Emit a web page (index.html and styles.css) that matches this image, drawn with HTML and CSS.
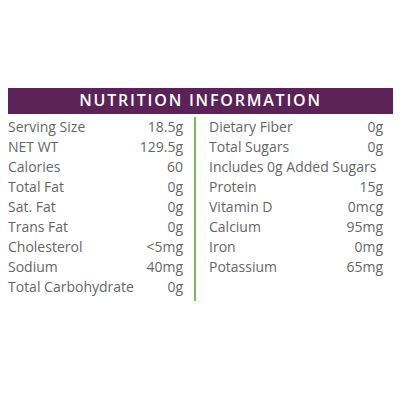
FILE: index.html
```html
<!DOCTYPE html>
<html lang="en">
<head>
  <meta charset="UTF-8">
  <meta name="viewport" content="width=device-width, initial-scale=1.0">
  <title>Nutrition Information</title>
  <link rel="stylesheet" href="styles.css">
</head>
<body>

  <div class="panel">
    <div class="panel-title">NUTRITION INFORMATION</div>

    <div class="facts">
      <!-- Kolom kiri -->
      <div class="col col-left">
        <div class="row"><span>Serving Size</span><span>18.5g</span></div>
        <div class="row"><span>NET WT</span><span>129.5g</span></div>
        <div class="row"><span>Calories</span><span>60</span></div>
        <div class="row"><span>Total Fat</span><span>0g</span></div>
        <div class="row"><span>Sat. Fat</span><span>0g</span></div>
        <div class="row"><span>Trans Fat</span><span>0g</span></div>
        <div class="row"><span>Cholesterol</span><span>&lt;5mg</span></div>
        <div class="row"><span>Sodium</span><span>40mg</span></div>
        <div class="row"><span>Total Carbohydrate</span><span>0g</span></div>
      </div>

      <!-- Kolom kanan -->
      <div class="col col-right">
        <div class="row"><span>Dietary Fiber</span><span>0g</span></div>
        <div class="row"><span>Total Sugars</span><span>0g</span></div>
        <div class="row"><span>Includes 0g Added Sugars</span></div>
        <div class="row"><span>Protein</span><span>15g</span></div>
        <div class="row"><span>Vitamin D</span><span>0mcg</span></div>
        <div class="row"><span>Calcium</span><span>95mg</span></div>
        <div class="row"><span>Iron</span><span>0mg</span></div>
        <div class="row"><span>Potassium</span><span>65mg</span></div>
      </div>
    </div>
  </div>

</body>
</html>
```

FILE: styles.css
```css
/* Dasar */
body {
  margin: 0;
  padding: 0;
  background: #fff;
  font-family: "Open Sans", Arial, sans-serif;
  color: #666;
}
.panel {
  margin: 88px 7px 0 8px;
}
/* Judul */
.panel-title {
  background-color: #5b2257;
  color: #fff;
  height: 26px;
  line-height: 25px;
  text-align: center;
  font-size: 16px;
  font-weight: 600;
  letter-spacing: 1.8px;
}
/* Tabel dua kolom */
.facts {
  display: flex;
  padding-top: 3px;
}
.col {
  display: flex;
  flex-direction: column;
}
.col-left {
  width: 175px;
  padding-right: 11px;
  padding-bottom: 4px;
  border-right: 2px solid #7fb55f;
}
.col-right {
  width: 174px;
  padding-left: 13px;
}
.row {
  display: flex;
  justify-content: space-between;
  height: 20px;
  line-height: 20px;
  font-size: 14px;
  white-space: nowrap;
}
```
